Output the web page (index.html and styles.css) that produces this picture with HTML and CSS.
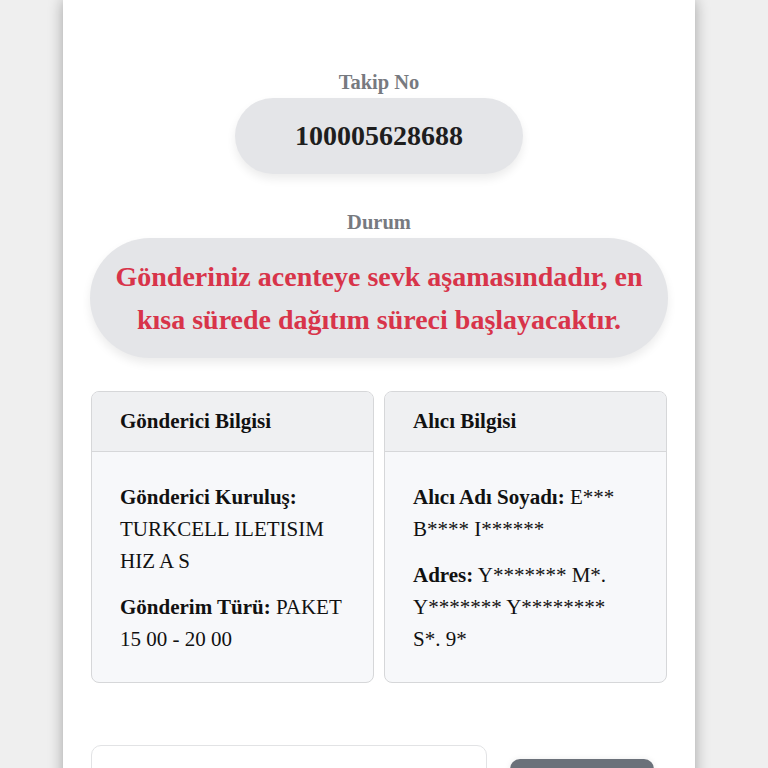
FILE: index.html
```html
<!DOCTYPE html>
<html lang="tr">
<head>
<meta charset="utf-8">
<title>Gönderi Takip</title>
<link rel="stylesheet" href="styles.css">
</head>
<body>
<main class="page">
  <section class="tracking">
    <div class="label">Takip No</div>
    <div class="pill number">100005628688</div>

    <div class="label label-gap">Durum</div>
    <div class="pill status">Gönderiniz acenteye sevk aşamasındadır, en kısa sürede dağıtım süreci başlayacaktır.</div>
  </section>

  <section class="cards">
    <div class="card">
      <div class="card-head">Gönderici Bilgisi</div>
      <div class="card-body">
        <p><b>Gönderici Kuruluş:</b> TURKCELL ILETISIM HIZ A S</p>
        <p><b>Gönderim Türü:</b> PAKET 15 00 - 20 00</p>
      </div>
    </div>
    <div class="card">
      <div class="card-head">Alıcı Bilgisi</div>
      <div class="card-body card-body-narrow">
        <p><b>Alıcı Adı Soyadı:</b> E*** B**** I******</p>
        <p><b>Adres:</b> Y******* M*. Y******* Y******** S*. 9*</p>
      </div>
    </div>
  </section>

  <section class="form-row">
    <div class="input-box"></div>
    <div class="btn"></div>
  </section>
</main>
</body>
</html>
```

FILE: styles.css
```css
html, body {
  margin: 0;
  padding: 0;
  background: #efefef;
  overflow: hidden;
}

body {
  font-family: "Liberation Serif", "Times New Roman", serif;
  color: #111;
}

.page {
  width: 576px;
  margin-left: 63px;
  padding: 67px 28px 40px;
  background: #ffffff;
  box-shadow: 0 0 14px rgba(0, 0, 0, 0.32);
  min-height: 800px;
}

.tracking {
  display: flex;
  flex-direction: column;
  align-items: center;
}

.label {
  font-size: 20.5px;
  line-height: 31px;
  font-weight: bold;
  color: #777a80;
}

.label-gap {
  margin-top: 33px;
}

.pill {
  background: #e4e5e8;
  border-radius: 999px;
  box-shadow: 0 5px 10px rgba(0, 0, 0, 0.08);
  font-weight: bold;
  font-size: 28px;
  text-align: center;
}

.number {
  padding: 17px 60px;
  line-height: 42px;
  color: #1e1e1e;
}

.status {
  align-self: stretch;
  margin: 0 -1px;
  padding: 17px 24px 17px;
  line-height: 43px;
  color: #d8344a;
}

.cards {
  display: grid;
  grid-template-columns: 1fr 1fr;
  gap: 10px;
  margin-top: 33px;
}

.card {
  border: 1.5px solid #d6d7d9;
  border-radius: 8px;
  background: #f7f8fa;
  overflow: hidden;
}

.card-head {
  background: #eff0f2;
  border-bottom: 1.5px solid #d6d7d9;
  padding: 14px 28px 14px;
  font-size: 21px;
  line-height: 31px;
  font-weight: bold;
}

.card-body {
  padding: 29px 26px 27px 28px;
  font-size: 21px;
  line-height: 32px;
}

.card-body-narrow {
  padding-right: 32px;
}

.card-body p {
  margin: 0 0 14px;
}

.card-body p:last-child {
  margin-bottom: 0;
}

.form-row {
  display: flex;
  align-items: flex-start;
  gap: 23px;
  margin-top: 62px;
}

.input-box {
  width: 394px;
  height: 70px;
  border: 1.5px solid #e2e3e5;
  border-radius: 10px;
  background: #fff;
}

.btn {
  width: 144px;
  height: 46px;
  margin-top: 14px;
  border-radius: 10px;
  background: #6b717a;
  box-shadow: 0 0 6px rgba(0, 0, 0, 0.08);
}
```
